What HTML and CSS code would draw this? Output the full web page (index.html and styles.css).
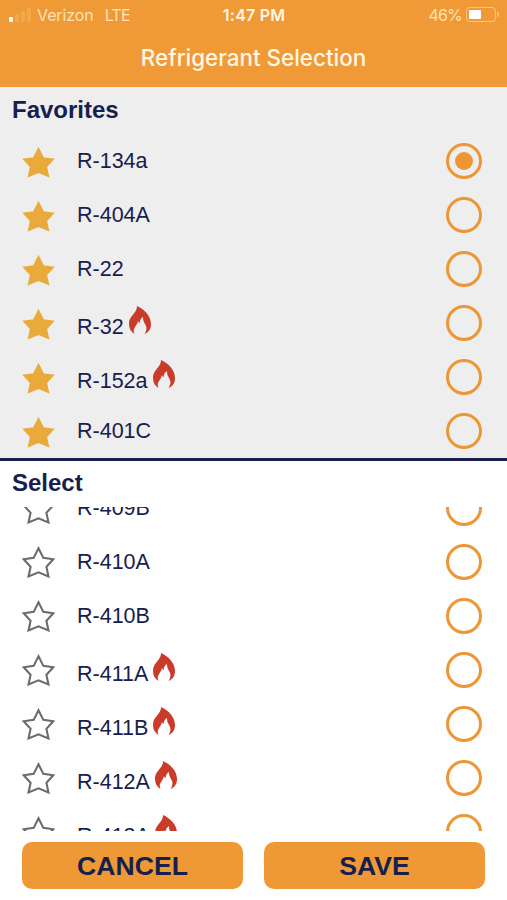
FILE: index.html
```html
<!DOCTYPE html>
<html lang="en">

<head>
      <meta charset="UTF-8">
      <meta name="viewport" content="width=device-width, initial-scale=1.0">
      <title>Refrigerant Selection</title>
      <link rel="stylesheet" href="styles.css">
</head>

<body>
      <!-- Shared icons -->
      <svg class="icon-defs" width="0" height="0">
            <symbol id="star" viewBox="0 0 96 92">
                  <path d="M48 6 L62 34 L91 38 L71 60 L77 88 L48 76 L19 88 L25 60 L5 38 L34 34 Z" />
            </symbol>
            <symbol id="flame" viewBox="0 0 66 84">
                  <path d="M24 0 C48 11 66 31 66 54 C66 68 60 78 47 84 C53 74 54 66 50 58 C46 50 41 43 42 33 C36 37 32 43 32 51 C29 50 28 48 27 45 C25 55 19 60 16 67 C13 73 14 79 17 84 C6 78 0 68 0 54 C0 38 9 30 16 21 C21 14 24 9 24 0 Z" />
            </symbol>
      </svg>

      <div class="phone">
            <header class="header">
                  <div class="status-bar">
                        <div class="status-left">
                              <div class="signal">
                                    <span class="bar bar-1 on"></span>
                                    <span class="bar bar-2"></span>
                                    <span class="bar bar-3"></span>
                                    <span class="bar bar-4"></span>
                              </div>
                              <span class="carrier">Verizon</span>
                              <span class="network">LTE</span>
                        </div>
                        <span class="time">1:47 PM</span>
                        <div class="status-right">
                              <span class="percent">46%</span>
                              <div class="battery"><div class="battery-level"></div></div>
                              <span class="battery-tip"></span>
                        </div>
                  </div>
                  <h1 class="title">Refrigerant Selection</h1>
            </header>

            <section class="favorites">
                  <h2 class="section-title">Favorites</h2>
                  <div class="list">
                        <div class="row">
                              <svg class="star filled"><use href="#star" /></svg>
                              <span class="name">R-134a</span>
                              <span class="radio checked"></span>
                        </div>
                        <div class="row">
                              <svg class="star filled"><use href="#star" /></svg>
                              <span class="name">R-404A</span>
                              <span class="radio"></span>
                        </div>
                        <div class="row">
                              <svg class="star filled"><use href="#star" /></svg>
                              <span class="name">R-22</span>
                              <span class="radio"></span>
                        </div>
                        <div class="row flammable">
                              <svg class="star filled"><use href="#star" /></svg>
                              <span class="name">R-32</span>
                              <svg class="flame"><use href="#flame" /></svg>
                              <span class="radio"></span>
                        </div>
                        <div class="row flammable">
                              <svg class="star filled"><use href="#star" /></svg>
                              <span class="name">R-152a</span>
                              <svg class="flame"><use href="#flame" /></svg>
                              <span class="radio"></span>
                        </div>
                        <div class="row">
                              <svg class="star filled"><use href="#star" /></svg>
                              <span class="name">R-401C</span>
                              <span class="radio"></span>
                        </div>
                  </div>
            </section>

            <section class="select">
                  <h2 class="section-title">Select</h2>
                  <div class="list scroll-list">
                        <div class="row">
                              <svg class="star"><use href="#star" /></svg>
                              <span class="name">R-409B</span>
                              <span class="radio"></span>
                        </div>
                        <div class="row">
                              <svg class="star"><use href="#star" /></svg>
                              <span class="name">R-410A</span>
                              <span class="radio"></span>
                        </div>
                        <div class="row">
                              <svg class="star"><use href="#star" /></svg>
                              <span class="name">R-410B</span>
                              <span class="radio"></span>
                        </div>
                        <div class="row flammable">
                              <svg class="star"><use href="#star" /></svg>
                              <span class="name">R-411A</span>
                              <svg class="flame"><use href="#flame" /></svg>
                              <span class="radio"></span>
                        </div>
                        <div class="row flammable">
                              <svg class="star"><use href="#star" /></svg>
                              <span class="name">R-411B</span>
                              <svg class="flame"><use href="#flame" /></svg>
                              <span class="radio"></span>
                        </div>
                        <div class="row flammable">
                              <svg class="star"><use href="#star" /></svg>
                              <span class="name">R-412A</span>
                              <svg class="flame"><use href="#flame" /></svg>
                              <span class="radio"></span>
                        </div>
                        <div class="row flammable">
                              <svg class="star"><use href="#star" /></svg>
                              <span class="name">R-413A</span>
                              <svg class="flame"><use href="#flame" /></svg>
                              <span class="radio"></span>
                        </div>
                  </div>
            </section>

            <footer class="actions">
                  <button class="button">CANCEL</button>
                  <button class="button">SAVE</button>
            </footer>
      </div>
</body>

</html>
```
FILE: styles.css
```css
* {
      box-sizing: border-box;
}

body {
      margin: 0;
      background-color: #fefefe;
      color: #17204d;
      font-family: "Liberation Sans", Arial, sans-serif;
}

.icon-defs {
      display: block;
}

.phone {
      width: 507px;
      height: 900px;
      display: flex;
      flex-direction: column;
      overflow: hidden;
}

/* Header */
.header {
      height: 87px;
      background-color: #f09a37;
      color: #fff7e6;
      font-family: Inter, sans-serif;
}

.status-bar {
      height: 29px;
      padding: 0 8px 0 9px;
      display: grid;
      grid-template-columns: 1fr auto 1fr;
      align-items: center;
      font-size: 16px;
}

.status-left,
.status-right {
      display: flex;
      align-items: center;
      color: #fde3b8;
}

.status-right {
      justify-content: flex-end;
}

.signal {
      display: flex;
      align-items: flex-end;
      gap: 2px;
      height: 14px;
      margin-right: 6px;
}

.carrier {
      letter-spacing: -0.1px;
}

.bar {
      width: 4px;
      border-radius: 1px;
      background-color: #f3a94a;
}

.bar.on {
      background-color: #fffdf8;
}

.bar-1 {
      height: 5px;
}

.bar-2 {
      height: 8px;
}

.bar-3 {
      height: 11px;
}

.bar-4 {
      height: 14px;
}

.network {
      margin-left: 11px;
      letter-spacing: -0.8px;
}

.time {
      font-weight: 600;
      letter-spacing: 0.2px;
}

.percent {
      letter-spacing: -0.8px;
}

.battery {
      width: 30px;
      height: 15px;
      margin-left: 4px;
      padding: 2px;
      border: 1px solid #f8c682;
      border-radius: 4px;
}

.battery-level {
      width: 12px;
      height: 9px;
      border-radius: 1px;
      background-color: #fff;
}

.battery-tip {
      width: 2px;
      height: 5px;
      margin-left: 1px;
      border-radius: 0 2px 2px 0;
      background-color: #f8c682;
}

.title {
      margin: 0;
      line-height: 57px;
      text-align: center;
      font-size: 22.4px;
      font-weight: 500;
}

/* Sections */
.favorites {
      height: 374px;
      background-color: #eeeeee;
      border-bottom: 3px solid #17204d;
}

.section-title {
      height: 47px;
      margin: 0;
      padding-left: 12px;
      line-height: 45px;
      font-size: 24px;
      font-weight: bold;
}

.select .section-title {
      height: 46px;
      line-height: 44px;
}

.scroll-list {
      height: 324px;
      overflow: hidden;
}

.scroll-list .row:first-child {
      margin-top: -26px;
}

.row {
      height: 54px;
      padding: 0 25px 0 22px;
      display: flex;
      align-items: center;
}

.star {
      width: 33px;
      height: 32px;
      margin-right: 22px;
      fill: none;
      stroke: #6b6b6b;
      stroke-width: 6;
}

.star.filled {
      margin-top: 1px;
      fill: #e9aa3b;
      stroke: #e9aa3b;
      stroke-width: 4;
}

.name {
      font-size: 21.5px;
      line-height: 26px;
}

.flammable .name {
      padding-top: 7px;
}

.flame {
      width: 22px;
      height: 28px;
      margin: -6px 0 0 5px;
      fill: #cb3b2a;
}

.radio {
      width: 36px;
      height: 36px;
      margin-left: auto;
      padding: 6px;
      border: 3px solid #ed9636;
      border-radius: 50%;
}

.radio.checked::before {
      content: '';
      display: block;
      width: 18px;
      height: 18px;
      border-radius: 50%;
      background-color: #ed9636;
}

/* Buttons */
.actions {
      padding: 11px 22px;
      display: flex;
      gap: 21px;
}

.button {
      flex: 1;
      height: 47px;
      padding: 2px 0 0;
      border: none;
      border-radius: 10px;
      background-color: #ef9936;
      color: #17204d;
      font-family: inherit;
      font-size: 26.6px;
      font-weight: bold;
      cursor: pointer;
}
```
